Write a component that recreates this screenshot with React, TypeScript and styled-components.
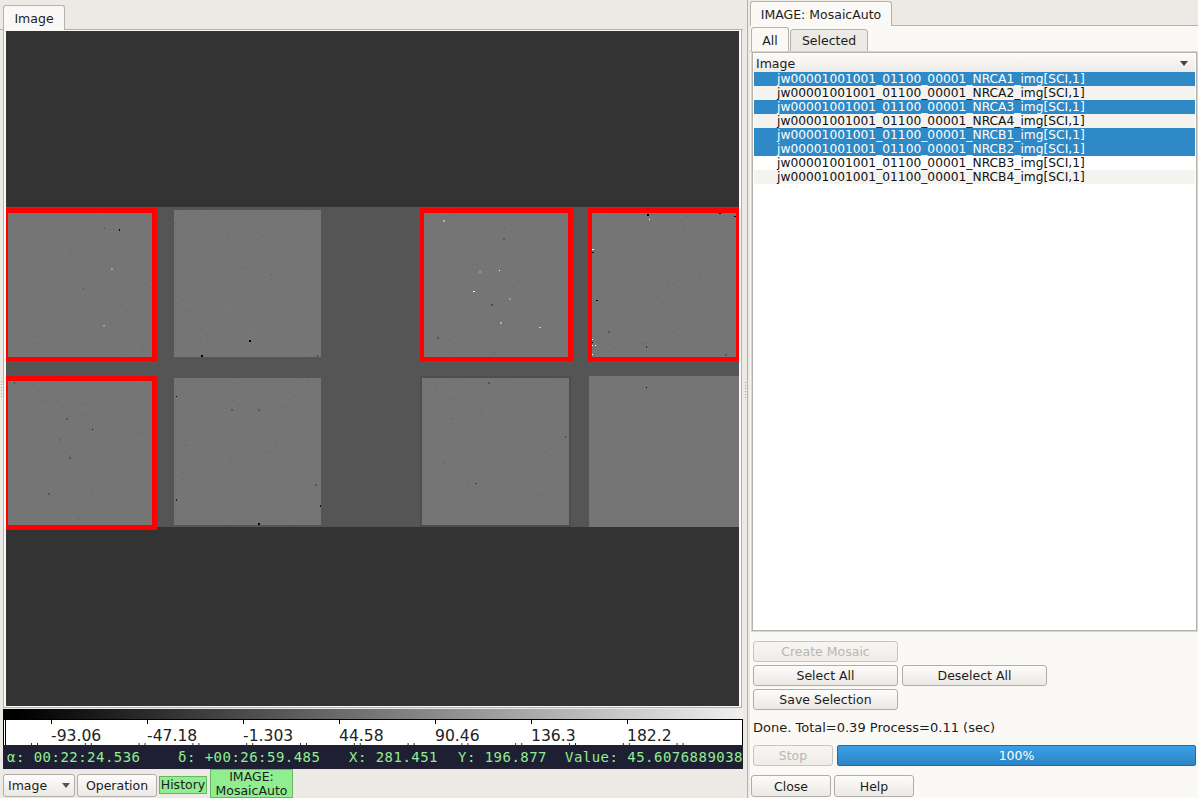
import React from "react";
import styled, { createGlobalStyle } from "styled-components";

const GlobalStyle = createGlobalStyle`
  html, body {
    margin: 0;
    padding: 0;
    background: #edeae5;
  }
  * {
    box-sizing: border-box;
  }
`;

const Page = styled.div`
  position: relative;
  width: 1198px;
  height: 798px;
  display: flex;
  overflow: hidden;
  background: #edeae5;
  color: #1c1c1c;
  font-family: "DejaVu Sans", sans-serif;
  font-size: 12.5px;
`;

const LeftPane = styled.div`
  width: 743px;
  flex: none;
  display: flex;
  flex-direction: column;
`;

const Splitter = styled.div`
  width: 4px;
  flex: none;
  display: flex;
  justify-content: center;
  padding-top: 382px;
`;

const Grip = styled.div`
  width: 1px;
  height: 17px;
  background: repeating-linear-gradient(
    #a5a29c 0,
    #a5a29c 1px,
    transparent 1px,
    transparent 3px
  );
`;

const EdgeGrip = styled(Grip)`
  position: absolute;
  left: 1px;
  top: 381px;
`;

const RightPane = styled.div`
  flex: 1;
  display: flex;
  flex-direction: column;
  padding-left: 2px;
  border-left: 1px solid #b5b2ac;
`;

const TabStrip = styled.div<{ $h: number; $pad: number }>`
  height: ${(p) => p.$h}px;
  flex: none;
  display: flex;
  align-items: flex-end;
  padding-left: ${(p) => p.$pad}px;
  border-bottom: 1px solid #b5b2ac;
`;

const Tab = styled.div<{ $w: number; $active?: boolean }>`
  width: ${(p) => p.$w}px;
  height: ${(p) => (p.$active ? 25 : 23)}px;
  margin-right: 1px;
  margin-bottom: -1px;
  display: flex;
  align-items: center;
  justify-content: center;
  background: ${(p) => (p.$active ? "#fbf9f6" : "#edeae5")};
  border: 1px solid #b5b2ac;
  border-bottom: ${(p) => (p.$active ? "none" : "1px solid #b5b2ac")};
  border-radius: 3px 3px 0 0;
`;

const ImageFrame = styled.div`
  width: 739px;
  height: 678px;
  flex: none;
  margin-left: 3px;
  padding: 1px 2px;
  background: #fbf9f6;
  border: 1px solid #b5b2ac;
  border-top: none;
`;

const Mosaic = styled.svg`
  display: block;
  width: 733px;
  height: 675px;
`;

const ColorBar = styled.div`
  width: 740px;
  height: 10px;
  flex: none;
  margin: 1px 0 0 3px;
  background: linear-gradient(90deg, #000 0%, #000 2%, #f0f0f0 100%);
`;

const Axis = styled.div`
  position: relative;
  width: 740px;
  height: 26px;
  flex: none;
  margin-left: 3px;
  padding-left: 45px;
  display: flex;
  overflow: hidden;
  background: #fff;
  border-top: 1px solid #000;
  border-right: 1px solid #000;
  border-left: 3px double #000;
`;

const AxisCell = styled.div`
  position: relative;
  width: 96px;
  flex: none;
  padding-top: 7px;
  font-size: 15.6px;
  line-height: 18px;
  color: #222;
  &::before {
    content: "";
    position: absolute;
    left: 0;
    top: 0;
    width: 1px;
    height: 4px;
    background: #000;
  }
`;

const AxisMarks = styled.svg`
  position: absolute;
  left: 0;
  bottom: 0;
  width: 737px;
  height: 2px;
`;

const Status = styled.div`
  width: 740px;
  height: 24px;
  flex: none;
  margin-left: 3px;
  padding-left: 4px;
  display: flex;
  align-items: center;
  overflow: hidden;
  background: #1f1f33;
  color: #90ee90;
  font-family: "DejaVu Sans Mono", monospace;
  font-size: 14px;
  letter-spacing: 0.47px;
  white-space: pre;
`;

const Field = styled.span<{ $w: number }>`
  width: ${(p) => p.$w}px;
  flex: none;
`;

const BottomBar = styled.div`
  flex: 1;
  display: flex;
  align-items: flex-end;
  padding-left: 3px;
`;

const Button = styled.div<{ $w: number; $h?: number; $off?: boolean }>`
  width: ${(p) => p.$w}px;
  height: ${(p) => p.$h ?? 21}px;
  flex: none;
  display: flex;
  align-items: center;
  justify-content: center;
  color: ${(p) => (p.$off ? "#bab7b3" : "#1c1c1c")};
  background: ${(p) =>
    p.$off
      ? "linear-gradient(#f8f6f3, #efece8)"
      : "linear-gradient(#fdfcfb, #ece9e4)"};
  border: 1px solid ${(p) => (p.$off ? "#c9c6c1" : "#b0ada7")};
  border-radius: 3px;
`;

const Combo = styled(Button)`
  justify-content: flex-start;
  padding-left: 4px;
  margin: 0 2px 1px 0;
  &::after {
    content: "";
    position: absolute;
    margin-left: 54px;
    border: 4px solid transparent;
    border-top: 5px solid #555;
    border-bottom: none;
  }
`;

const OpButton = styled(Button)`
  margin: 0 2px 1px 0;
`;

const GreenTag = styled.div<{ $w: number; $h: number; $mb: number }>`
  width: ${(p) => p.$w}px;
  height: ${(p) => p.$h}px;
  margin: 0 3px ${(p) => p.$mb}px 0;
  flex: none;
  display: flex;
  align-items: center;
  justify-content: center;
  text-align: center;
  line-height: 14px;
  background: #90ee90;
  border: 1px solid #66b866;
`;

const PanelFrame = styled.div`
  flex: 1;
  display: flex;
  flex-direction: column;
  background: #fbf9f6;
`;

const InnerTabs = styled(TabStrip)`
  margin-top: 1px;
`;

const Tree = styled.div`
  height: 579px;
  flex: none;
  margin: 0 1px 0 2px;
  padding: 1px;
  background: #fff;
  border: 1px solid #b5b2ac;
  outline: 1px solid #d8d5d0;
`;

const TreeHeader = styled.div`
  height: 18px;
  display: flex;
  align-items: center;
  justify-content: space-between;
  padding: 0 7px 0 2px;
  background: linear-gradient(#fbfaf8, #eeebe7);
  &::after {
    content: "";
    border: 4px solid transparent;
    border-top: 5px solid #444;
    border-bottom: none;
  }
`;

const TreeRow = styled.div<{ $sel: boolean; $alt: boolean }>`
  height: 14px;
  padding-left: 23px;
  font-size: 12.25px;
  line-height: 14px;
  white-space: nowrap;
  color: ${(p) => (p.$sel ? "#fff" : "#111")};
  background: ${(p) =>
    p.$sel ? "#2e89c6" : p.$alt ? "#f5f3f0" : "#fff"};
`;

const Controls = styled.div`
  flex: 1;
  display: flex;
  flex-direction: column;
  padding: 10px 2px 0 3px;
`;

const ButtonRow = styled.div`
  display: flex;
  gap: 4px;
  margin-bottom: 3px;
`;

const StatusText = styled.div`
  height: 15px;
  margin: 7px 0 10px;
  font-size: 13px;
  line-height: 15px;
`;

const Progress = styled.div`
  flex: 1;
  height: 21px;
  display: flex;
  align-items: center;
  justify-content: center;
  color: #fff;
  background: linear-gradient(#3ba0e6, #2d85c6);
  border: 1px solid #20689f;
  border-radius: 2px;
`;

const FooterRow = styled.div`
  display: flex;
  gap: 3px;
  margin: 6px 0 0 -2px;
`;

type Speck = [number, number, number, number, string];

type Tile = {
  x: number;
  y: number;
  w: number;
  h: number;
  noisy?: boolean;
};

const tiles: Tile[] = [
  { x: 8, y: 213, w: 144, h: 144, noisy: true },
  { x: 174, y: 210, w: 147, h: 147, noisy: true },
  { x: 424, y: 213, w: 144, h: 144, noisy: true },
  { x: 592, y: 213, w: 144, h: 144, noisy: true },
  { x: 8, y: 381, w: 144, h: 144, noisy: true },
  { x: 174, y: 378, w: 147, h: 147, noisy: true },
  { x: 422, y: 378, w: 147, h: 147, noisy: true },
  { x: 589, y: 376, w: 150, h: 151 },
];

const frames = [
  { x: 3, y: 208, w: 154, h: 153 },
  { x: 420, y: 208, w: 153, h: 153 },
  { x: 588, y: 208, w: 156, h: 153 },
  { x: 3, y: 376, w: 154, h: 154 },
];

const specks: Speck[] = [
  [119, 229, 1, 2, "#000"],
  [104, 228, 1, 1, "#4a4a4a"],
  [111, 268, 2, 2, "#9c9c9c"],
  [103, 325, 2, 2, "#9c9c9c"],
  [83, 288, 1, 2, "#555"],
  [249, 340, 2, 2, "#000"],
  [201, 355, 2, 2, "#000"],
  [317, 355, 1, 2, "#444"],
  [499, 270, 1, 1, "#fff"],
  [473, 291, 2, 1, "#fff"],
  [443, 220, 2, 2, "#b0b0b0"],
  [500, 322, 2, 2, "#b0b0b0"],
  [539, 327, 2, 1, "#ccc"],
  [479, 271, 2, 2, "#999"],
  [509, 298, 2, 2, "#999"],
  [491, 304, 2, 2, "#4a4a4a"],
  [437, 337, 2, 2, "#555"],
  [503, 238, 2, 2, "#555"],
  [647, 214, 2, 2, "#000"],
  [649, 219, 1, 1, "#fff"],
  [592, 249, 2, 1, "#fff"],
  [592, 252, 2, 1, "#000"],
  [596, 300, 2, 1, "#000"],
  [719, 213, 2, 1, "#000"],
  [734, 216, 2, 1, "#000"],
  [592, 339, 1, 1, "#fff"],
  [592, 342, 1, 1, "#000"],
  [592, 345, 1, 1, "#fff"],
  [595, 345, 1, 1, "#fff"],
  [592, 354, 1, 1, "#fff"],
  [646, 346, 1, 2, "#333"],
  [608, 331, 2, 2, "#555"],
  [725, 354, 2, 2, "#555"],
  [14, 382, 1, 2, "#4a4a4a"],
  [66, 418, 2, 2, "#555"],
  [92, 429, 1, 1, "#111"],
  [69, 457, 2, 2, "#555"],
  [48, 493, 2, 2, "#555"],
  [59, 439, 1, 2, "#555"],
  [176, 396, 1, 1, "#000"],
  [176, 499, 1, 2, "#222"],
  [258, 523, 2, 2, "#000"],
  [320, 505, 1, 2, "#111"],
  [231, 409, 2, 2, "#555"],
  [258, 409, 2, 2, "#555"],
  [315, 484, 2, 2, "#555"],
  [646, 387, 1, 1, "#000"],
  [488, 382, 2, 2, "#555"],
  [565, 436, 1, 2, "#444"],
  [475, 483, 2, 1, "#444"],
];

// small seeded generator, so the noise is the same on every load
const makeNoise = (tile: Tile, seed: number): Speck[] => {
  let s = seed;
  const next = () => {
    s = (s * 16807) % 2147483647;
    return s / 2147483647;
  };
  const out: Speck[] = [];
  for (let i = 0; i < 420; i++) {
    const x = tile.x + Math.floor(next() * (tile.w - 2));
    const y = tile.y + Math.floor(next() * (tile.h - 2));
    const wide = next() > 0.7;
    const shade = next();
    const color =
      shade < 0.6 ? "#707070" : shade < 0.85 ? "#7a7a7a" : "#696969";
    out.push([x, y, wide ? 2 : 1, 1, color]);
  }
  return out;
};

const noise = tiles.flatMap((t, i) => (t.noisy ? makeNoise(t, 4211 + i * 977) : []));

const MosaicImage = () => (
  <Mosaic viewBox="6 31 733 675" shapeRendering="crispEdges">
    <rect x="6" y="31" width="733" height="675" fill="#333333" />
    <rect x="6" y="207" width="733" height="320" fill="#555555" />
    <rect x="420" y="376" width="151" height="151" fill="#4e4e4e" />
    {frames.map((f) => (
      <rect key={`${f.x}-${f.y}`} x={f.x} y={f.y} width={f.w} height={f.h} fill="#ff0000" />
    ))}
    {tiles.map((t) => (
      <rect key={`${t.x}-${t.y}`} x={t.x} y={t.y} width={t.w} height={t.h} fill="#757575" />
    ))}
    {noise.concat(specks).map(([x, y, w, h, c], i) => (
      <rect key={i} x={x} y={y} width={w} height={h} fill={c} />
    ))}
  </Mosaic>
);

const axisLabels = ["-93.06", "-47.18", "-1.303", "44.58", "90.46", "136.3", "182.2"];

const minorTicks = Array.from({ length: 13 }, (_, i) => 25 + i * 53.8);

const rows = [
  { id: "NRCA1", sel: true },
  { id: "NRCA2", sel: false },
  { id: "NRCA3", sel: true },
  { id: "NRCA4", sel: false },
  { id: "NRCB1", sel: true },
  { id: "NRCB2", sel: true },
  { id: "NRCB3", sel: false },
  { id: "NRCB4", sel: false },
];

const App: React.FC = () => {
  return (
    <Page>
      <GlobalStyle />
      <EdgeGrip />
      <LeftPane>
        <TabStrip $h={30} $pad={3}>
          <Tab $w={62} $active>
            Image
          </Tab>
        </TabStrip>
        <ImageFrame>
          <MosaicImage />
        </ImageFrame>
        <ColorBar />
        <Axis>
          {axisLabels.map((label) => (
            <AxisCell key={label}>{label}</AxisCell>
          ))}
          <AxisMarks viewBox="0 0 737 2">
            {minorTicks.map((x) => (
              <g key={x} fill="#333">
                <rect x={x} y="0" width="1" height="2" />
                <rect x={x + 6} y="0" width="1" height="2" />
              </g>
            ))}
          </AxisMarks>
        </Axis>
        <Status>
          <Field $w={171}>α: 00:22:24.536</Field>
          <Field $w={171}>δ: +00:26:59.485</Field>
          <Field $w={109}>X: 281.451</Field>
          <Field $w={107}>Y: 196.877</Field>
          <Field $w={300}>Value: 45.60768890386</Field>
        </Status>
        <BottomBar>
          <Combo $w={72} $h={23}>
            Image
          </Combo>
          <OpButton $w={80} $h={23}>
            Operation
          </OpButton>
          <GreenTag $w={48} $h={18} $mb={4}>
            History
          </GreenTag>
          <GreenTag $w={83} $h={29} $mb={0}>
            IMAGE:
            <br />
            MosaicAuto
          </GreenTag>
        </BottomBar>
      </LeftPane>
      <Splitter>
        <Grip />
      </Splitter>
      <RightPane>
        <TabStrip $h={26} $pad={0}>
          <Tab $w={142} $active>
            IMAGE: MosaicAuto
          </Tab>
        </TabStrip>
        <PanelFrame>
          <InnerTabs $h={25} $pad={1}>
            <Tab $w={38} $active>
              All
            </Tab>
            <Tab $w={78}>Selected</Tab>
          </InnerTabs>
          <Tree>
            <TreeHeader>Image</TreeHeader>
            {rows.map((row, i) => (
              <TreeRow key={row.id} $sel={row.sel} $alt={i % 2 === 1}>
                jw00001001001_01100_00001_{row.id}_img[SCI,1]
              </TreeRow>
            ))}
          </Tree>
          <Controls>
            <ButtonRow>
              <Button $w={145} $off>
                Create Mosaic
              </Button>
            </ButtonRow>
            <ButtonRow>
              <Button $w={145}>Select All</Button>
              <Button $w={145}>Deselect All</Button>
            </ButtonRow>
            <ButtonRow>
              <Button $w={145}>Save Selection</Button>
            </ButtonRow>
            <StatusText>Done. Total=0.39 Process=0.11 (sec)</StatusText>
            <ButtonRow>
              <Button $w={80} $off>
                Stop
              </Button>
              <Progress>100%</Progress>
            </ButtonRow>
            <FooterRow>
              <Button $w={80} $h={22}>
                Close
              </Button>
              <Button $w={80} $h={22}>
                Help
              </Button>
            </FooterRow>
          </Controls>
        </PanelFrame>
      </RightPane>
    </Page>
  );
};

export default App;
